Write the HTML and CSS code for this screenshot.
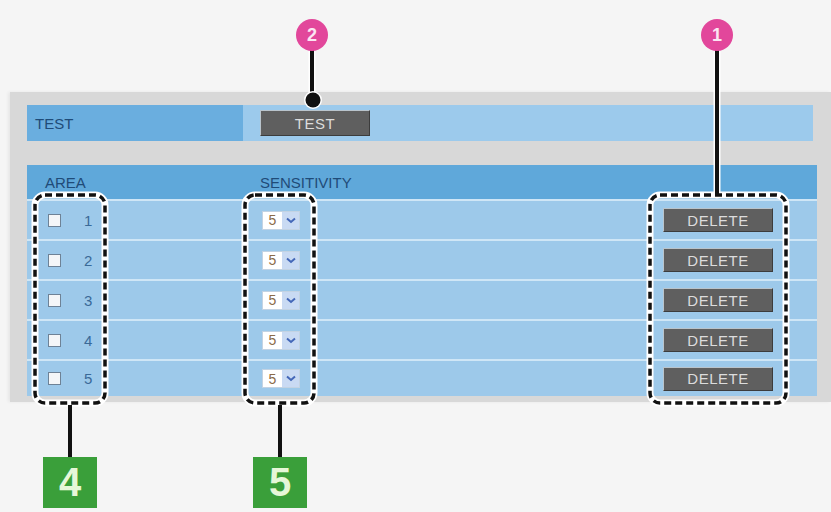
FILE: index.html
```html
<!DOCTYPE html>
<html>
<head>
<meta charset="utf-8">
<link rel="stylesheet" href="styles.css">
</head>
<body>
<div class="stage">
  <div class="panel">
    <div class="test-row">
      <div class="test-label">TEST</div>
      <div class="test-value"><button class="btn btn-test">TEST</button></div>
    </div>
    <div class="table">
      <div class="thead">
        <div class="c-area">AREA</div>
        <div class="c-sens">SENSITIVITY</div>
      </div>
      <div class="row">
        <div class="c-area"><span class="chk"></span><span class="num">1</span></div>
        <div class="c-sens"><span class="sel"><span class="sel-val">5</span><span class="sel-arr"><svg width="10" height="7" viewBox="0 0 10 7"><path d="M1 1.5 L5 5 L9 1.5" fill="none" stroke="#4467b8" stroke-width="2"/></svg></span></span></div>
        <div class="c-del"><button class="btn btn-del">DELETE</button></div>
      </div>
      <div class="row">
        <div class="c-area"><span class="chk"></span><span class="num">2</span></div>
        <div class="c-sens"><span class="sel"><span class="sel-val">5</span><span class="sel-arr"><svg width="10" height="7" viewBox="0 0 10 7"><path d="M1 1.5 L5 5 L9 1.5" fill="none" stroke="#4467b8" stroke-width="2"/></svg></span></span></div>
        <div class="c-del"><button class="btn btn-del">DELETE</button></div>
      </div>
      <div class="row">
        <div class="c-area"><span class="chk"></span><span class="num">3</span></div>
        <div class="c-sens"><span class="sel"><span class="sel-val">5</span><span class="sel-arr"><svg width="10" height="7" viewBox="0 0 10 7"><path d="M1 1.5 L5 5 L9 1.5" fill="none" stroke="#4467b8" stroke-width="2"/></svg></span></span></div>
        <div class="c-del"><button class="btn btn-del">DELETE</button></div>
      </div>
      <div class="row">
        <div class="c-area"><span class="chk"></span><span class="num">4</span></div>
        <div class="c-sens"><span class="sel"><span class="sel-val">5</span><span class="sel-arr"><svg width="10" height="7" viewBox="0 0 10 7"><path d="M1 1.5 L5 5 L9 1.5" fill="none" stroke="#4467b8" stroke-width="2"/></svg></span></span></div>
        <div class="c-del"><button class="btn btn-del">DELETE</button></div>
      </div>
      <div class="row row-last">
        <div class="c-area"><span class="chk"></span><span class="num">5</span></div>
        <div class="c-sens"><span class="sel"><span class="sel-val">5</span><span class="sel-arr"><svg width="10" height="7" viewBox="0 0 10 7"><path d="M1 1.5 L5 5 L9 1.5" fill="none" stroke="#4467b8" stroke-width="2"/></svg></span></span></div>
        <div class="c-del"><button class="btn btn-del">DELETE</button></div>
      </div>
    </div>
  </div>

  <svg class="overlay" width="831" height="512" viewBox="0 0 831 512">
    <g fill="none" stroke="#ffffff" stroke-width="7" stroke-linecap="round">
      <rect x="35" y="195" width="70" height="208" rx="10"/>
      <rect x="245" y="195" width="69" height="208" rx="10"/>
      <rect x="650" y="195" width="136" height="208" rx="10"/>
      <line x1="717" y1="52" x2="717" y2="195"/>
      <line x1="312" y1="52" x2="312" y2="100"/>
    </g>
    <g fill="none" stroke="#111111" stroke-width="3.5" stroke-dasharray="7 4">
      <rect x="35" y="195" width="70" height="208" rx="10"/>
      <rect x="245" y="195" width="69" height="208" rx="10"/>
      <rect x="650" y="195" width="136" height="208" rx="10"/>
    </g>
    <g stroke="#111111" stroke-width="4">
      <line x1="717" y1="50" x2="717" y2="196"/>
      <line x1="312" y1="50" x2="312" y2="100"/>
      <line x1="70" y1="405" x2="70" y2="458"/>
      <line x1="280" y1="405" x2="280" y2="458"/>
    </g>
    <circle cx="313" cy="100" r="9" fill="#ffffff"/>
    <circle cx="313" cy="100" r="7.5" fill="#111111"/>
  </svg>

  <div class="badge badge-2">2</div>
  <div class="badge badge-1">1</div>
  <div class="tag tag-4">4</div>
  <div class="tag tag-5">5</div>
</div>
</body>
</html>
```

FILE: styles.css
```css
* { box-sizing: border-box; }
html, body { margin: 0; padding: 0; }
body {
  background: #f5f5f5;
  font-family: "Liberation Sans", Arial, sans-serif;
  width: 831px;
  height: 512px;
  overflow: hidden;
}
.stage {
  position: relative;
  width: 831px;
  height: 512px;
  padding-top: 92px;
  padding-left: 10px;
}
.panel {
  background: #d8d8d8;
  height: 310px;
  padding: 13px 0 0 17px;
  box-shadow: -2px 0 3px rgba(0,0,0,0.06);
}
.test-row {
  display: flex;
  width: 786px;
  height: 36px;
}
.test-label {
  width: 216px;
  background: #6aaedf;
  color: #1f4b78;
  font-size: 15px;
  display: flex;
  align-items: center;
  padding-left: 8px;
}
.test-value {
  flex: 1;
  background: #9ccaec;
  display: flex;
  align-items: center;
  padding-left: 17px;
}
.btn {
  font-family: "Liberation Sans", Arial, sans-serif;
  font-size: 15px;
  letter-spacing: 0.5px;
  color: #dcdcdc;
  background: #5f5f5f;
  border: 1px solid;
  border-color: #b9c4cc #3c3c3c #3c3c3c #b9c4cc;
  width: 110px;
  height: 24px;
  padding: 0;
  display: flex;
  align-items: center;
  justify-content: center;
}
.btn-test { height: 26px; }
.table {
  margin-top: 24px;
  width: 790px;
}
.thead {
  height: 34px;
  background: #5fa8da;
  display: flex;
  align-items: center;
  color: #1f4b78;
  font-size: 15px;
}
.thead .c-area { width: 216px; padding-left: 18px; }
.thead .c-sens { padding-left: 17px; }
.row {
  height: 40px;
  background: #9dc9ea;
  border-top: 2px solid #cfe6f6;
  display: flex;
  align-items: center;
}
.row-last { height: 37px; }
.row .c-area {
  width: 216px;
  padding-left: 21px;
  display: flex;
  align-items: center;
}
.chk {
  width: 13px;
  height: 13px;
  background: #f4f6f8;
  border: 1px solid #6e8296;
  display: inline-block;
}
.num {
  margin-left: 23px;
  font-size: 15px;
  color: #3a6a98;
}
.row .c-sens {
  flex: 1;
  padding-left: 19px;
  display: flex;
  align-items: center;
}
.sel {
  display: inline-flex;
  width: 38px;
  height: 19px;
  border: 1px solid #c3d3e3;
}
.sel-val {
  width: 19px;
  background: #ffffff;
  color: #8a6a48;
  font-size: 14px;
  display: flex;
  align-items: center;
  justify-content: center;
}
.sel-arr {
  flex: 1;
  background: #c9daf3;
  display: flex;
  align-items: center;
  justify-content: center;
}
.c-del { padding-right: 44px; }
.overlay {
  position: absolute;
  left: 0;
  top: 0;
}
.badge {
  position: absolute;
  top: 19px;
  width: 32px;
  height: 32px;
  border-radius: 50%;
  background: #e2479b;
  color: #fbe6f2;
  font-weight: bold;
  font-size: 18px;
  display: flex;
  align-items: center;
  justify-content: center;
}
.badge-2 { left: 296px; }
.badge-1 { left: 701px; }
.tag {
  position: absolute;
  top: 457px;
  width: 54px;
  height: 51px;
  background: #3a9f3a;
  color: #e6f7d8;
  font-weight: bold;
  font-size: 40px;
  display: flex;
  align-items: center;
  justify-content: center;
}
.tag-4 { left: 43px; }
.tag-5 { left: 253px; }
```
